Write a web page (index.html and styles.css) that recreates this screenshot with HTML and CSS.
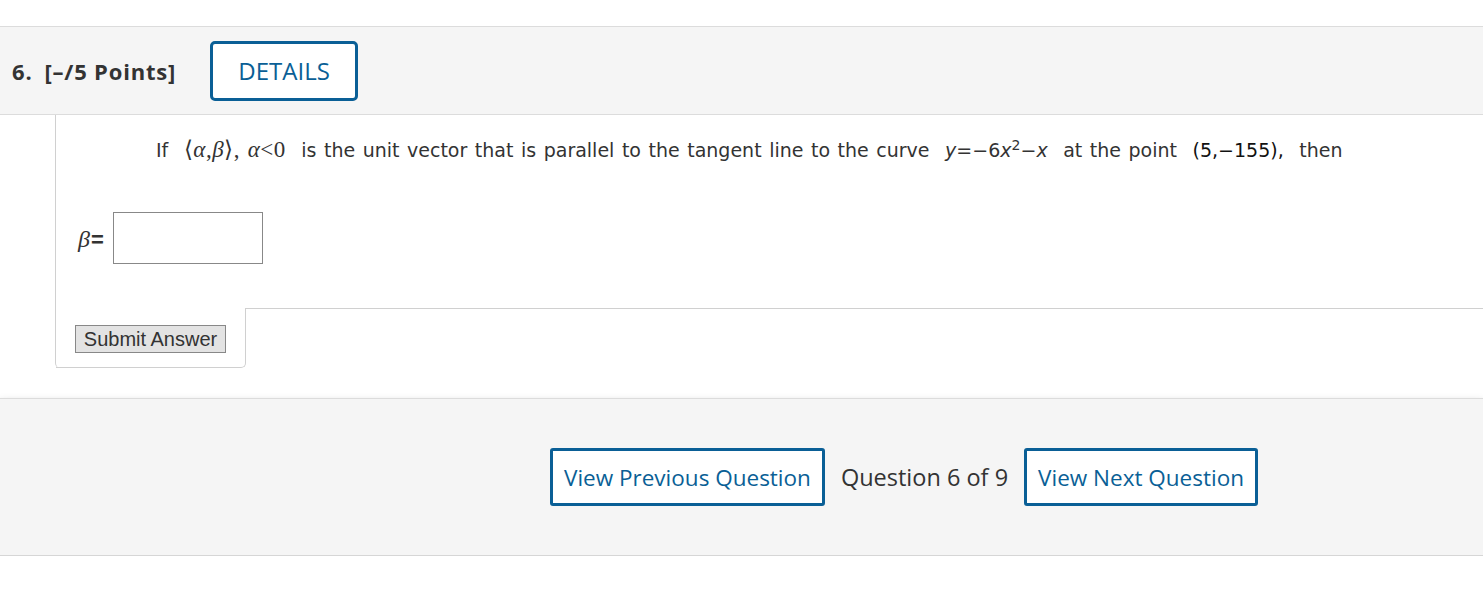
FILE: index.html
```html
<!DOCTYPE html>
<html lang="en">
<head>
    <meta charset="UTF-8">
    <title>Question 6</title>
    <link rel="stylesheet" href="styles.css">
</head>
<body>
    <div class="question">
        <div class="q-head">
            <span class="q-num">6.</span>
            <span class="q-points">[&ndash;/5 Points]</span>
            <button class="details" type="button">DETAILS</button>
        </div>
        <div class="q-body">
            <p class="q-text">
                If <span class="m">&#10216;<i>&alpha;</i>,<i>&beta;</i>&#10217;, <i>&alpha;</i>&lt;0</span> is the unit vector that is parallel to the tangent line to the curve <span class="v"><i>y</i>=&minus;6<i>x</i><sup>2</sup>&minus;<i>x</i></span> at the point <span class="pt">(5,&minus;155),</span> then
            </p>
            <div class="answer-row">
                <span class="beta"><i>&beta;</i><b>=</b></span>
                <input class="answer" type="text">
            </div>
            <div class="submit-row">
                <div class="submit-cell">
                    <button class="submit" type="button">Submit Answer</button>
                </div>
                <div class="submit-rest"></div>
            </div>
        </div>
    </div>

    <div class="q-nav">
        <button class="nav-btn" type="button">View Previous Question</button>
        <span class="nav-count">Question 6 of 9</span>
        <button class="nav-btn" type="button">View Next Question</button>
    </div>
</body>
</html>
```

FILE: styles.css
```css
body {
    margin: 0;
    padding-top: 26px;
    background: #fff;
    font-family: "Open Sans", sans-serif;
    color: #333;
}
.q-head {
    display: flex;
    align-items: center;
    height: 87px;
    padding-left: 12px;
    background: #f5f5f5;
    border-top: 1px solid #dcdcdc;
    border-bottom: 1px solid #dcdcdc;
}
.q-num {
    font-size: 22px;
    font-weight: bold;
    letter-spacing: 0.8px;
    margin-right: 12px;
}
.q-points {
    font-size: 22px;
    font-weight: bold;
    letter-spacing: 0.8px;
    margin-right: 34px;
}
.details {
    width: 148px;
    height: 60px;
    background: #fff;
    border: 3px solid #0a5f96;
    border-radius: 5px;
    color: #0a5f96;
    font-family: "Open Sans", sans-serif;
    font-size: 24px;
    padding: 0;
}
.q-body {
    margin-left: 55px;
    border-left: 1px solid #d0d0d0;
    border-bottom-left-radius: 5px;
}
.q-text {
    margin: 0;
    padding: 17px 0 0 100px;
    font-family: "DejaVu Sans", sans-serif;
    font-size: 19px;
    line-height: 26px;
    color: #333;
    word-spacing: 1.5px;
}
.m {
    font-family: "Liberation Serif", serif;
    font-size: 23px;
    margin: 0 8px;
    letter-spacing: 0.5px;
}
.v {
    margin: 0 8px;
}
.v sup {
    font-size: 14px;
}
.pt {
    color: #111;
    margin: 0 8px;
}
.answer-row {
    display: flex;
    align-items: center;
    margin-top: 49px;
    padding-left: 22px;
}
.beta {
    margin-right: 9px;
    font-size: 22px;
}
.beta i {
    font-family: "Liberation Serif", serif;
    font-size: 24px;
    margin-right: 1px;
}
.beta b {
    font-family: "Liberation Sans", sans-serif;
    font-weight: bold;
    font-size: 22px;
}
.answer {
    width: 150px;
    height: 52px;
    box-sizing: border-box;
    border: 1px solid #888;
}
.submit-row {
    display: flex;
    margin-top: 44px;
}
.submit-cell {
    width: 190px;
    height: 60px;
    box-sizing: border-box;
    padding: 17px 0 0 19px;
    border-right: 1px solid #d0d0d0;
    border-bottom: 1px solid #d0d0d0;
    border-bottom-right-radius: 5px;
}
.submit-rest {
    flex: 1;
    border-top: 1px solid #d0d0d0;
}
.submit {
    width: 151px;
    height: 28px;
    padding: 0;
    background: #e3e3e3;
    border: 1px solid #888;
    font-family: "Liberation Sans", Arial, sans-serif;
    font-size: 20px;
    color: #333;
}
.q-nav {
    display: flex;
    align-items: center;
    gap: 16px;
    margin-top: 30px;
    height: 156px;
    padding-left: 550px;
    background: #f5f5f5;
    border-top: 1px solid #dcdcdc;
    border-bottom: 1px solid #d6d6d6;
    box-shadow: 0 4px 8px rgba(0, 0, 0, 0.25);
}
.nav-btn {
    height: 58px;
    padding: 0 11px;
    background: #fff;
    border: 3px solid #0a5f96;
    border-radius: 3px;
    color: #0a5f96;
    font-family: "Open Sans", sans-serif;
    font-size: 22.5px;
}
.nav-count {
    font-size: 23.5px;
    color: #333;
}
```
